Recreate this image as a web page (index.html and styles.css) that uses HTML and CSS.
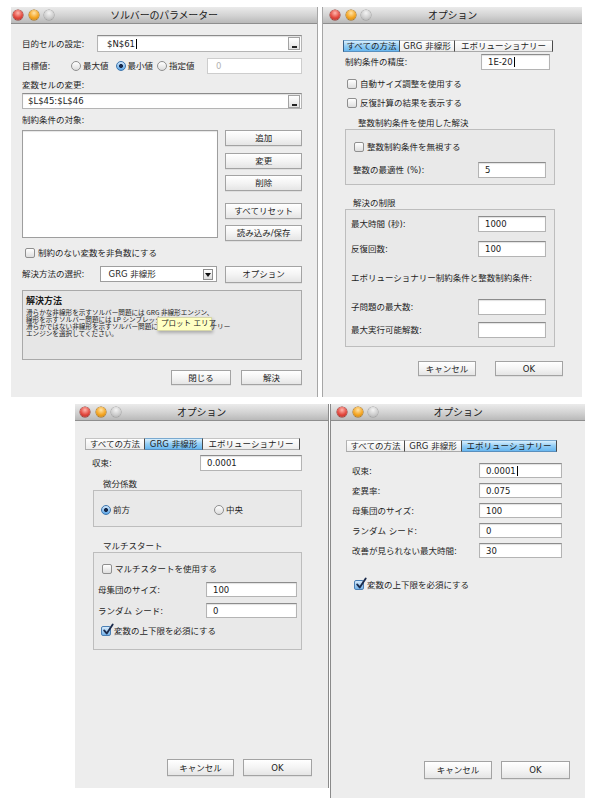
FILE: index.html
```html
<!DOCTYPE html>
<html lang="ja">
<head>
<meta charset="utf-8">
<title>ソルバー</title>
<link rel="stylesheet" href="styles.css">
</head>
<body>

<section class="win w1">
  <header class="tb"><span class="lights"><i class="l red"></i><i class="l yel"></i><i class="l gry"></i></span><span class="ttl">ソルバーのパラメーター</span><span></span></header>
  <div class="body b1">
    <div class="row r-target">
      <span class="lbl lw75">目的セルの設定:</span>
      <div class="fld grow pad10"><span>$N$61</span><i class="caret"></i><span class="pick"></span></div>
    </div>
    <div class="row r-goal">
      <span class="lbl lw49">目標値:</span>
      <span class="ropt gap6"><i class="rd"></i>最大値</span>
      <span class="ropt gap3"><i class="rd on"></i>最小値</span>
      <span class="ropt"><i class="rd"></i>指定値</span>
      <div class="fld dis w95">0</div>
    </div>
    <div class="row r-lab">変数セルの変更:</div>
    <div class="row r-var">
      <div class="fld grow"><span>$L$45:$L$46</span><span class="pick"></span></div>
    </div>
    <div class="row r-lab">制約条件の対象:</div>
    <div class="row r-cons">
      <div class="list"></div>
      <div class="side">
        <div class="btn">追加</div>
        <div class="btn s7">変更</div>
        <div class="btn s6">削除</div>
        <div class="btn s12">すべてリセット</div>
        <div class="btn s6">読み込み/保存</div>
      </div>
    </div>
    <div class="row r-neg"><i class="cb"></i><span class="cbl">制約のない変数を非負数にする</span></div>
    <div class="row r-method">
      <span class="lbl lw78">解決方法の選択:</span>
      <div class="sel"><span>GRG 非線形</span><span class="arr"></span></div>
      <div class="btn opt">オプション</div>
    </div>
    <div class="desc">
      <div class="desc-t">解決方法</div>
      <p class="desc-p">滑らかな非線形を示すソルバー問題には GRG 非線形エンジン、<br>線形を示すソルバー問題には LP シンプレックス エンジン、<br>滑らかではない非線形を示すソルバー問題にはエボリューショナリー<br>エンジンを選択してください。</p>
    </div>
    <div class="row r-foot1">
      <div class="btn bw60">閉じる</div>
      <div class="btn bw61">解決</div>
    </div>
  </div>
  <div class="tip">プロット エリア</div>
</section>

<section class="win w2">
  <header class="tb"><span class="lights"><i class="l red"></i><i class="l yel"></i><i class="l gry"></i></span><span class="ttl">オプション</span><span></span></header>
  <div class="body b2">
    <div class="tabs">
      <span class="tab first on t57">すべての方法</span><span class="tab t55">GRG 非線形</span><span class="tab t98">エボリューショナリー</span>
    </div>
    <div class="row r-prec">
      <span class="lbl grow">制約条件の精度:</span>
      <div class="fld w69"><span>1E-20</span><i class="caret"></i></div>
    </div>
    <div class="row r-c1"><i class="cb"></i><span class="cbl">自動サイズ調整を使用する</span></div>
    <div class="row r-c2"><i class="cb"></i><span class="cbl">反復計算の結果を表示する</span></div>

    <div class="grp g21">
      <div class="gt gt13">整数制約条件を使用した解決</div>
      <div class="gb gb21">
        <div class="row r-ci"><i class="cb"></i><span class="cbl">整数制約条件を無視する</span></div>
        <div class="row r-opt">
          <span class="lbl grow">整数の最適性 (%):</span>
          <div class="fld w68">5</div>
        </div>
      </div>
    </div>

    <div class="grp g22">
      <div class="gt gt8">解決の制限</div>
      <div class="gb gb22">
        <div class="row r-l1">
          <span class="lbl grow">最大時間 (秒):</span>
          <div class="fld w68">1000</div>
        </div>
        <div class="row r-l2">
          <span class="lbl grow">反復回数:</span>
          <div class="fld w68">100</div>
        </div>
        <div class="row r-l3">エボリューショナリー制約条件と整数制約条件:</div>
        <div class="row r-l4">
          <span class="lbl grow">子問題の最大数:</span>
          <div class="fld w68"></div>
        </div>
        <div class="row r-l5">
          <span class="lbl grow">最大実行可能解数:</span>
          <div class="fld w68"></div>
        </div>
      </div>
    </div>

    <div class="row r-foot2">
      <div class="btn bw58">キャンセル</div>
      <div class="btn bw68">OK</div>
    </div>
  </div>
</section>

<section class="win w3">
  <header class="tb"><span class="lights"><i class="l red"></i><i class="l yel"></i><i class="l gry"></i></span><span class="ttl">オプション</span><span></span></header>
  <div class="body b3">
    <div class="tabs">
      <span class="tab first t60">すべての方法</span><span class="tab on t58">GRG 非線形</span><span class="tab t97">エボリューショナリー</span>
    </div>
    <div class="row r-conv">
      <span class="lbl lw115">収束:</span>
      <div class="fld w102">0.0001</div>
    </div>

    <div class="grp g31">
      <div class="gt gt10">微分係数</div>
      <div class="gb gb31">
        <div class="row r-rad">
          <span class="ropt rcol"><i class="rd on"></i>前方</span>
          <span class="ropt"><i class="rd"></i>中央</span>
        </div>
      </div>
    </div>

    <div class="grp g32">
      <div class="gt gt10">マルチスタート</div>
      <div class="gb gb32">
        <div class="row r-m1"><i class="cb"></i><span class="cbl">マルチスタートを使用する</span></div>
        <div class="row r-m2">
          <span class="lbl grow">母集団のサイズ:</span>
          <div class="fld w91">100</div>
        </div>
        <div class="row r-m3">
          <span class="lbl grow">ランダム シード:</span>
          <div class="fld w91">0</div>
        </div>
        <div class="row r-m4"><i class="cb on"><svg viewBox="0 0 14 14" class="chk"><path d="M2.5 7.5 L5.5 11 L12.5 0.5" /></svg></i><span class="cbl">変数の上下限を必須にする</span></div>
      </div>
    </div>

    <div class="row r-foot3">
      <div class="btn bw67">キャンセル</div>
      <div class="btn bw69">OK</div>
    </div>
  </div>
</section>

<section class="win w4">
  <header class="tb"><span class="lights"><i class="l red"></i><i class="l yel"></i><i class="l gry"></i></span><span class="ttl">オプション</span><span></span></header>
  <div class="body b4">
    <div class="tabs">
      <span class="tab first t59">すべての方法</span><span class="tab t57">GRG 非線形</span><span class="tab on t95">エボリューショナリー</span>
    </div>
    <div class="row r-e r-e1">
      <span class="lbl grow">収束:</span>
      <div class="fld w83"><span>0.0001</span><i class="caret"></i></div>
    </div>
    <div class="row r-e">
      <span class="lbl grow">変異率:</span>
      <div class="fld w83">0.075</div>
    </div>
    <div class="row r-e">
      <span class="lbl grow">母集団のサイズ:</span>
      <div class="fld w83">100</div>
    </div>
    <div class="row r-e">
      <span class="lbl grow">ランダム シード:</span>
      <div class="fld w83">0</div>
    </div>
    <div class="row r-e">
      <span class="lbl grow">改善が見られない最大時間:</span>
      <div class="fld w83">30</div>
    </div>
    <div class="row r-ec"><i class="cb on"><svg viewBox="0 0 14 14" class="chk"><path d="M2.5 7.5 L5.5 11 L12.5 0.5" /></svg></i><span class="cbl">変数の上下限を必須にする</span></div>

    <div class="row r-foot4">
      <div class="btn bw68">キャンセル</div>
      <div class="btn bw69">OK</div>
    </div>
  </div>
</section>

</body>
</html>
```

FILE: styles.css
```css
* { box-sizing: border-box; margin: 0; padding: 0; }

body {
  margin: 0;
  width: 595px;
  height: 807px;
  position: relative;
  overflow: hidden;
  background: #ffffff;
  font-family: "DejaVu Sans", "Noto Sans CJK JP", sans-serif;
  font-size: 8.5px;
  line-height: 12px;
  color: #1f1f1f;
}

/* ---------- windows ---------- */
.win {
  position: absolute;
  background: #ededed;
  display: flex;
  flex-direction: column;
}
.w1 { left: 11px; top: 7px; width: 307px; height: 390px; border-right: 1px solid #a6a6a6; }
.w2 { left: 322px; top: 7px; width: 260px; height: 390px; border-left: 1px solid #a6a6a6; }
.w3 { left: 75px; top: 404px; width: 254px; height: 384px; border-right: 1px solid #8a8a8a; }
.w4 { left: 330px; top: 404px; width: 255px; height: 394px; border-left: 1px solid #8a8a8a; }

.tb {
  flex: none;
  height: 17px;
  display: grid;
  grid-template-columns: 1fr auto 1fr;
  align-items: center;
  background: linear-gradient(#ebebeb, #d2d2d2 55%, #b9b9b9);
  border-bottom: 1px solid #8e8e8e;
}
.ttl { font-family: "Noto Sans CJK JP", sans-serif; font-size: 10px; color: #202020; letter-spacing: -0.2px; }
.lights { display: flex; gap: 5.5px; }
.w1 .lights { margin-left: 2px; }
.w2 .lights { margin-left: 7px; }
.w3 .lights { margin-left: 5px; }
.w4 .lights { margin-left: 6px; }
.l { display: block; width: 10px; height: 10px; border-radius: 50%; }
.red { background: radial-gradient(circle at 50% 30%, #ffb7ae, #e3493f 55%, #a92a22); box-shadow: 0 0 0 0.5px #8c2a24; }
.yel { background: radial-gradient(circle at 50% 30%, #ffe3a8, #f5a623 55%, #c27b10); box-shadow: 0 0 0 0.5px #a0680e; }
.gry { background: radial-gradient(circle at 50% 30%, #f4f4f4, #cfcfcf 55%, #a9a9a9); box-shadow: 0 0 0 0.5px #9a9a9a; }

.body { flex: 1; display: flex; flex-direction: column; }

/* ---------- common controls ---------- */
.row { display: flex; align-items: center; flex: none; }
.grow { flex: 1; }
.lbl { white-space: nowrap; }

.fld {
  height: 16px;
  background: #ffffff;
  border: 1px solid #b4b4b4;
  border-top-color: #8c8c8c;
  box-shadow: inset 0 1px 1px rgba(0, 0, 0, 0.12);
  display: flex;
  align-items: center;
  padding-left: 6px;
  color: #1a1a1a;
  flex: none;
}
.fld.grow { flex: 1; }
.pad10 { padding-left: 9px; }
.fld.dis { color: #b3b3b3; border-color: #cdcdcd; box-shadow: none; padding-left: 8px; }
.caret { display: block; width: 1px; height: 10px; background: #000; margin-left: 1px; }
.pick {
  margin-left: auto;
  margin-right: 1px;
  width: 12px;
  height: 13px;
  border: 1px solid #a3a3a3;
  background: linear-gradient(#ffffff, #e2e2e2);
  position: relative;
}
.pick::after {
  content: "";
  position: absolute;
  left: 3px;
  bottom: 1px;
  width: 5px;
  height: 2px;
  background: #222;
}

.btn {
  height: 16px;
  border: 1px solid #a3a3a3;
  background: linear-gradient(#ffffff, #f4f4f4 50%, #e5e5e5);
  box-shadow: 0 1px 0 rgba(0, 0, 0, 0.06);
  display: flex;
  align-items: center;
  justify-content: center;
  color: #232323;
  flex: none;
}

.cb {
  display: block;
  flex: none;
  width: 10px;
  height: 10px;
  border: 1px solid #8f8f8f;
  border-radius: 2px;
  background: linear-gradient(#ffffff, #dedede);
  position: relative;
}
.cb.on { background: linear-gradient(#d7ebfc, #74b3ea); border-color: #4b7fb4; }
.chk { position: absolute; left: 0; top: -3px; width: 12px; height: 12px; overflow: visible; }
.chk path { fill: none; stroke: #1b2b4c; stroke-width: 2.2; stroke-linecap: round; stroke-linejoin: round; }
.cbl { margin-left: 3px; white-space: nowrap; }

.ropt { display: flex; align-items: center; gap: 2px; white-space: nowrap; }
.gap6 { margin-right: 7px; }
.gap3 { margin-right: 4px; }
.rd {
  display: block;
  flex: none;
  width: 10px;
  height: 10px;
  border-radius: 50%;
  border: 1px solid #8f8f8f;
  background: linear-gradient(#ffffff, #dcdcdc);
}
.rd.on {
  border-color: #3d76ae;
  background: radial-gradient(circle, #17294a 0 1.7px, transparent 2.3px), linear-gradient(#d2e8fc, #5aa4e5);
}

.tabs { display: flex; height: 12px; flex: none; }
.tab {
  display: flex;
  align-items: center;
  justify-content: center;
  white-space: nowrap;
  border-top: 1px solid #c4c4c4;
  border-bottom: 1px solid #a9a9a9;
  border-right: 1px solid #4a4a4a;
  background: linear-gradient(#ffffff, #ececec);
  color: #1e1e1e;
}
.tab.first { border-left: 1px solid #b0b0b0; }
.tab.on { background: linear-gradient(#d9effd, #92cdf5 50%, #68b7f0); border-top-color: #7aa9cf; border-bottom-color: #5a8fbd; }
.tab.first.on { border-left-color: #3a5f85; }

.grp { flex: none; }
.gt { height: 11px; line-height: 11px; white-space: nowrap; color: #262626; }
.gb { border: 1px solid #bdbdbd; background: #e9e9e9; display: flex; flex-direction: column; }

/* ---------- window 1 ---------- */
.b1 { padding: 11px 15px 0 11px; }
.lw75 { width: 75px; }
.lw49 { width: 49px; }
.lw78 { width: 78px; }
.r-target { height: 17px; }
.r-target .fld { height: 17px; }
.r-goal { height: 17px; margin-top: 5px; }
.w95 { width: 95px; margin-left: auto; }
.r-lab { height: 12px; margin-top: 5px; }
.r-var { height: 16px; margin-top: 2px; }
.r-var .fld { padding-left: 5px; }
.r-cons { height: 110px; margin-top: 4px; align-items: flex-start; }
.list { width: 197px; height: 108px; background: #fff; border: 1px solid #9e9e9e; box-shadow: inset 0 1px 1px rgba(0,0,0,.1); }
.side { margin-left: 7px; width: 77px; display: flex; flex-direction: column; }
.s7 { margin-top: 7px; }
.s6 { margin-top: 6px; }
.s12 { margin-top: 12px; }
.r-neg { height: 12px; margin-top: 7px; padding-left: 3px; }
.r-method { height: 18px; margin-top: 6px; }
.sel {
  width: 118px;
  height: 16px;
  border: 1px solid #9e9e9e;
  background: #fff;
  display: flex;
  align-items: center;
  padding-left: 8px;
}
.arr {
  margin-left: auto;
  margin-right: 3px;
  width: 10px;
  height: 11px;
  border: 1px solid #8d8d8d;
  background: linear-gradient(#ffffff, #dddddd);
  position: relative;
}
.arr::after {
  content: "";
  position: absolute;
  left: 1px;
  top: 3px;
  border-left: 3px solid transparent;
  border-right: 3px solid transparent;
  border-top: 4px solid #111;
}
.opt { width: 77px; height: 17px; margin-left: 8px; }
.desc {
  margin-top: 7px;
  height: 70px;
  border: 1px solid #a9a9a9;
  background: #e6e6e6;
  padding: 4px 3px 0 3px;
  flex: none;
}
.desc-t { font-family: "Noto Sans CJK JP", sans-serif; font-weight: bold; font-size: 9px; line-height: 11px; color: #1a1a1a; }
.desc-p {
  font-family: "Noto Sans CJK JP", sans-serif;
  font-size: 6.6px;
  line-height: 7px;
  color: #222;
  white-space: nowrap;
  margin-top: 3px;
}
.r-foot1 { margin-top: 10px; height: 15px; justify-content: flex-end; gap: 10px; }
.r-foot1 .btn { height: 15px; }
.bw60 { width: 60px; }
.bw61 { width: 61px; }
.tip {
  position: absolute;
  left: 146px;
  top: 310px;
  width: 55px;
  height: 14px;
  background: #ffffc4;
  border: 1px solid #d8d8a8;
  box-shadow: 1px 2px 3px rgba(0, 0, 0, 0.25);
  font-size: 7.5px;
  line-height: 12px;
  padding-left: 3px;
  white-space: nowrap;
  color: #222;
}

/* ---------- window 2 ---------- */
.b2 { padding: 16px 19px 0 20px; }
.t57 { width: 57px; }
.t55 { width: 55px; }
.t98 { width: 98px; }
.r-prec { height: 16px; margin-top: 2px; padding-left: 2px; padding-right: 13px; }
.w69 { width: 69px; }
.r-c1 { height: 12px; margin-top: 8px; padding-left: 4px; }
.r-c2 { height: 12px; margin-top: 7px; padding-left: 4px; }
.g21 { margin-top: 9px; margin-left: 2px; margin-right: 8px; }
.g22 { margin-top: 13px; margin-left: 2px; margin-right: 8px; }
.gt13 { padding-left: 13px; }
.gt8 { padding-left: 8px; }
.gb21 { padding: 11px 8px 6px 7px; }
.r-ci { height: 12px; padding-left: 1px; }
.r-opt { height: 16px; margin-top: 9px; }
.w68 { width: 68px; }
.gb22 { padding: 6px 8px 8px 5px; }
.r-l1 { height: 16px; }
.r-l2 { height: 16px; margin-top: 9px; }
.r-l3 { height: 12px; margin-top: 15px; }
.r-l4 { height: 16px; margin-top: 15px; }
.r-l5 { height: 16px; margin-top: 7px; }
.r-foot2 { margin-top: 14px; height: 15px; justify-content: flex-end; gap: 19px; }
.r-foot2 .btn { height: 15px; }
.bw58 { width: 58px; }
.bw68 { width: 68px; }

/* ---------- window 3 ---------- */
.b3 { padding: 17px 16px 12px 10px; }
.t60 { width: 60px; }
.t58 { width: 58px; }
.t97 { width: 97px; }
.r-conv { height: 16px; margin-top: 5px; padding-left: 7px; }
.lw115 { width: 108px; }
.w102 { width: 102px; }
.g31 { margin-top: 8px; margin-left: 8px; width: 209px; }
.g32 { margin-top: 14px; margin-left: 8px; width: 209px; }
.gt10 { padding-left: 10px; }
.gb31 { padding: 13px 0 10px 7px; }
.r-rad { height: 12px; }
.rcol { width: 113px; }
.gb32 { padding: 10px 4px 12px 4px; }
.r-m1 { height: 12px; padding-left: 4px; }
.r-m2 { height: 15px; margin-top: 7px; }
.r-m3 { height: 15px; margin-top: 6px; }
.r-m2 .fld, .r-m3 .fld { height: 15px; }
.w91 { width: 91px; }
.r-m4 { height: 12px; margin-top: 7px; padding-left: 3px; }
.r-foot3 { margin-top: auto; height: 17px; justify-content: flex-end; gap: 9px; }
.r-foot3 .btn { height: 17px; }
.bw67 { width: 67px; }
.bw69 { width: 69px; }

/* ---------- window 4 ---------- */
.b4 { padding: 19px 15px 19px 15px; }
.t59 { width: 59px; }
.t57 { width: 57px; }
.t95 { width: 95px; }
.r-e { height: 15px; margin-top: 5px; padding-left: 6px; padding-right: 8px; }
.r-e .fld { height: 15px; }
.r-e1 { margin-top: 11px; }
.w83 { width: 83px; }
.r-ec { height: 12px; margin-top: 21px; padding-left: 8px; }
.r-foot4 { margin-top: auto; height: 18px; justify-content: flex-end; gap: 9px; }
.r-foot4 .btn { height: 18px; }
```
